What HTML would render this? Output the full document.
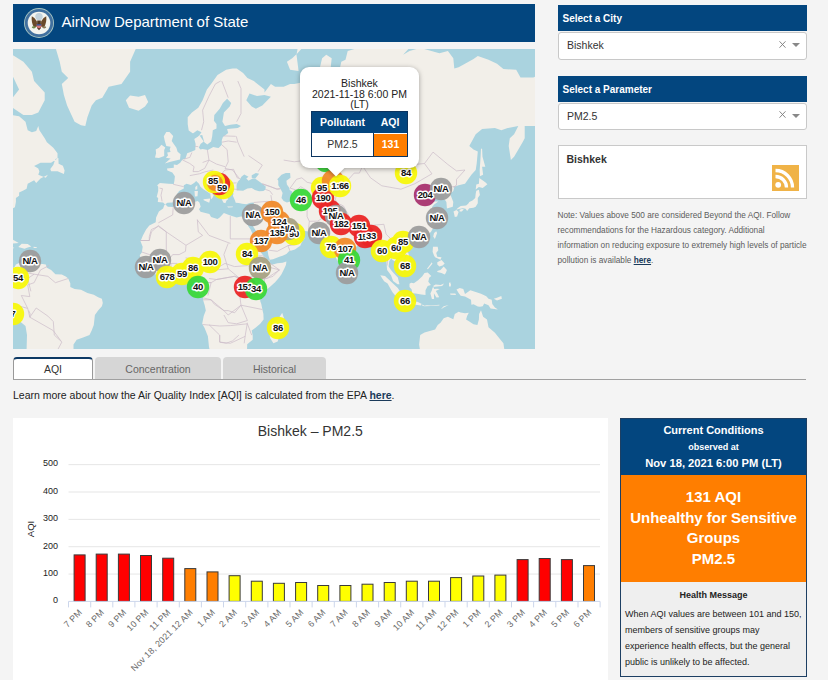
<!DOCTYPE html>
<html><head><meta charset="utf-8">
<style>
*{margin:0;padding:0;box-sizing:border-box}
html,body{width:828px;height:680px;overflow:hidden;background:#f4f4f4;font-family:"Liberation Sans",sans-serif;color:#333}
.a{position:absolute}
.hdr{left:13px;top:4px;width:522px;height:38px;background:#03467f}
.hdr .t{left:48.5px;top:9px;font-size:15px;color:#fff;line-height:18px;white-space:nowrap}
.map{left:13px;top:49px;width:522px;height:300px;background:#aad3df;overflow:hidden}
.sh{left:557.5px;width:249px;height:26px;background:#03467f;color:#fff;font-weight:bold;font-size:10px;padding-left:5px;line-height:28px}
.sel{left:557.5px;width:249px;height:27.4px;background:#fff;border:1px solid #c8c8c8;border-radius:3px;font-size:10.5px;color:#333;padding-left:8.5px;line-height:24px}
.sel .x{left:220px;top:7.5px;width:7px;height:7px}
.sel .ar{left:233px;top:10px;width:0;height:0;border-left:4px solid transparent;border-right:4px solid transparent;border-top:4px solid #888}
.box{left:557.5px;top:145px;width:249px;height:54px;background:#fff;border:1px solid #c9c9c9}
.note{left:557.5px;top:208px;width:252px;font-size:8.25px;line-height:15px;color:#5c5c5c}
.tab{top:357px;height:22px;border-radius:4px 4px 0 0;font-size:10.5px;text-align:center;line-height:24px}
.learn{left:13px;top:388px;font-size:10.5px;color:#222;white-space:nowrap;line-height:14px}
.chart{left:13px;top:418px;width:595px;height:262px;background:#fff}
.cc{left:620px;top:418px;width:187px;height:259px;border:1px solid #1d3f63;background:#efefef}
</style></head><body>

<div class="a hdr">
  <svg class="a" style="left:10px;top:3px" width="32" height="32" viewBox="0 0 32 32">
    <circle cx="16" cy="16" r="15" fill="#a9c6c2"/>
    <circle cx="16" cy="16" r="14.1" fill="#41709f"/>
    <circle cx="16" cy="16" r="11.3" fill="#f4f4ef"/>
    <circle cx="16" cy="9.6" r="3.7" fill="#c3d2dc"/>
    <path d="M8.8 9.2 Q8 15.5 11 20.3 L14.2 19.6 L13.8 14.2 Q12.3 10.8 8.8 9.2Z" fill="#6b4a2a"/>
    <path d="M23.2 9.2 Q24 15.5 21 20.3 L17.8 19.6 L18.2 14.2 Q19.7 10.8 23.2 9.2Z" fill="#6b4a2a"/>
    <path d="M14.2 13.5 L17.8 13.5 L18 21 L16 23.2 L14 21Z" fill="#4e3620"/>
    <path d="M13.7 17 h4.6 v3 q-2.3 2.6 -4.6 0z" fill="#d7777a"/>
    <rect x="13.7" y="17" width="4.6" height="1.6" fill="#3f5390"/>
    <ellipse cx="10.8" cy="20.3" rx="2" ry="1.1" fill="#6f8c4c"/>
    <ellipse cx="21.2" cy="20.3" rx="2" ry="1.1" fill="#8a7a5a"/>
  </svg>
  <div class="a t">AirNow Department of State</div>
</div>

<div class="a map" id="map"><svg width="522" height="300" viewBox="0 0 522 300" style="position:absolute;left:0;top:0">
<rect width="522" height="300" fill="#aad3df"/>
<path d="M8.3 -37.4L23.2 -72.7L57.3 -95.1L100.0 -112.6L121.3 -87.2L138.4 -72.7L125.6 -27.5L123.5 -1.8L117.1 12.8L117.1 22.7L108.5 34.9L95.7 37.8L89.3 48.7L82.9 51.3L78.7 56.4L74.4 68.2L72.3 77.0L68.0 76.2L61.6 72.7L57.3 63.6L54.1 56.4L50.9 46.1L48.8 34.9L55.2 29.0L48.8 22.7L46.7 12.8L42.4 -1.8L31.7 -18.4L18.9 -22.8ZM112.8 51.3L117.1 46.6L125.6 47.7L132.0 46.1L135.2 52.9L132.0 57.4L125.6 61.7L119.2 59.8L116.0 58.8ZM-6.7 2.0L10.4 12.8L18.9 22.7L21.1 32.0L31.7 43.4L31.7 51.3L25.3 63.6L18.9 65.9L10.4 65.9L-0.3 58.8L-2.4 51.3L6.1 40.6L-2.4 22.7L-17.3 25.9L-28.0 16.2L-19.5 2.0ZM-49.3 77.0L-38.7 81.2L-33.3 89.3L-23.7 91.2L-12.0 96.9L-10.9 104.2L-5.6 109.4L-4.5 98.8L-0.3 93.2L-0.3 85.3L-2.4 74.9L-2.4 65.9L6.1 67.3L12.5 72.7L14.7 81.2L18.9 83.3L23.2 82.1L25.3 77.0L26.4 81.2L31.7 89.3L33.9 93.2L40.3 98.8L44.5 104.2L44.5 109.4L38.1 113.8L27.5 113.8L21.1 117.1L25.3 119.4L26.4 122.6L25.3 125.7L32.8 128.8L34.9 125.7L27.5 129.4L23.2 133.9L21.1 131.2L14.7 134.7L13.6 139.7L10.4 141.4L6.1 143.4L6.1 146.7L2.9 148.9L2.9 152.9L1.9 158.2L-0.3 159.5L-2.4 161.3L-6.7 164.6L-9.9 169.6L-7.7 178.1L-6.7 182.2L-8.8 182.4L-12.0 176.9L-14.1 171.4L-19.5 170.1L-49.3 173.3ZM38.1 122.2L44.5 122.2L50.9 125.1L51.6 121.6L49.9 116.8L45.6 114.8L45.4 109.1L42.4 110.1L40.3 116.1L37.3 120.0ZM-17.3 189.9L-8.8 187.1L-1.3 189.9L5.7 194.0L-1.3 194.7L-6.7 190.3L-17.3 190.3ZM5.3 198.1L8.7 194.7L14.7 195.1L18.3 197.6L14.7 198.5L11.5 199.8ZM-3.0 198.3L1.4 198.7L-0.3 199.6ZM20.6 197.8L24.1 198.3L23.4 199.0L20.6 199.0ZM-0.3 219.6L1.9 217.6L2.9 215.5L6.1 214.0L10.4 211.8L11.5 214.4L14.7 211.8L18.9 215.5L23.2 215.3L29.6 215.0L32.8 215.5L33.9 218.7L38.1 220.9L42.4 225.2L48.8 225.6L53.1 227.7L55.2 229.5L57.3 234.2L57.3 238.0L61.6 240.1L68.0 240.8L74.4 244.0L80.8 245.7L85.1 248.3L88.9 249.8L89.8 254.0L88.9 257.3L85.1 261.6L81.9 266.0L80.8 275.9L78.7 281.6L76.5 286.1L70.1 288.4L63.7 290.8L60.5 295.5L60.5 301.5L57.3 307.6L10.4 307.6L13.6 300.3L14.0 286.1L12.5 277.0L1.9 268.2L-0.3 263.8L-5.6 254.0L-8.8 248.7L-6.7 238.0L-4.1 234.8L-0.9 229.5L-1.3 223.0L-4.5 217.6L-8.8 218.7L-13.1 216.6L-28.0 207.8L-28.0 220.9ZM152.1 155.6L150.1 153.5L144.8 152.9L145.2 148.9L143.7 148.1L145.2 141.9L145.2 137.7L144.2 136.2L146.9 134.1L155.5 134.7L160.8 135.0L161.4 131.8L161.9 127.2L159.3 123.5L154.4 121.6L154.0 119.4L160.8 118.7L160.8 115.5L164.0 116.1L167.2 113.8L169.3 110.8L172.5 109.4L174.2 104.2L178.9 102.4L182.3 101.0L182.6 95.0L181.3 90.1L186.4 86.5L181.1 85.3L175.7 81.6L174.7 74.9L174.7 68.2L178.9 63.6L185.3 58.8L189.6 51.3L193.9 40.6L198.1 34.9L204.5 25.9L213.1 20.8L219.5 19.5L223.7 19.5L230.1 24.0L234.4 29.0L240.8 32.0L251.5 40.6L251.5 43.4L257.9 34.9L262.1 37.8L270.7 37.8L277.1 34.9L281.3 34.9L289.9 33.2L294.1 27.1L306.9 32.0L309.1 36.1L311.2 33.2L305.9 22.7L309.1 9.3L313.3 5.7L318.7 9.3L317.6 19.5L319.7 34.9L321.9 43.4L324.0 32.0L328.3 12.8L332.5 10.7L334.7 2.0L347.5 -1.8L349.6 -9.8L360.3 -18.4L377.3 -27.5L385.9 -34.3L394.4 -24.7L402.9 -16.6L400.8 -5.8L390.1 5.7L396.5 2.0L407.2 -1.1L415.7 1.2L426.4 4.2L434.9 2.0L440.3 9.3L441.3 19.5L445.6 18.2L452.0 14.8L460.5 10.0L464.8 7.1L475.5 10.7L484.0 14.8L490.4 20.1L503.2 20.8L507.5 28.4L520.3 28.4L526.7 25.9L548.0 32.0L569.3 48.7L569.3 77.0L526.7 77.0L511.7 77.0L511.7 89.3L509.6 93.2L501.1 107.7L497.9 111.1L495.7 96.9L496.8 89.3L501.1 85.3L505.3 77.0L494.7 79.1L488.3 81.2L481.9 79.1L469.1 80.0L462.7 85.3L456.3 96.9L460.5 100.6L464.8 102.4L463.7 114.5L462.7 121.0L458.4 125.7L452.0 134.7L445.6 136.2L441.3 137.7L440.3 141.9L437.1 144.7L440.3 152.9L439.8 157.7L433.9 159.5L433.4 152.9L430.7 148.9L430.7 144.7L424.3 143.4L422.1 147.5L424.3 142.5L417.9 147.0L415.1 147.5L415.7 151.6L418.5 152.4L425.3 152.4L421.1 155.6L418.9 158.2L421.7 164.6L424.3 168.9L424.3 172.1L420.0 179.3L417.9 182.9L412.5 187.6L406.1 189.4L399.7 192.2L398.0 190.8L394.4 191.0L391.2 194.4L390.1 197.8L395.5 204.5L397.2 212.2L394.4 214.8L390.1 218.7L388.0 219.6L387.8 215.5L383.7 213.3L379.5 211.1L378.4 208.9L376.3 212.2L375.6 217.6L378.0 220.9L380.1 223.5L384.8 228.4L386.5 235.2L384.6 235.2L380.1 232.0L378.0 226.2L374.1 220.9L373.7 216.6L372.6 203.4L371.4 201.2L366.7 203.9L365.2 202.3L365.6 196.7L360.9 192.2L359.8 188.7L357.1 189.9L353.9 190.6L349.6 191.0L348.5 194.4L344.3 196.7L339.6 201.2L335.3 204.5L335.1 209.4L334.2 214.4L332.5 215.9L329.3 220.9L327.2 218.9L325.5 213.7L323.6 210.2L321.9 205.6L319.7 200.1L319.3 195.6L319.3 192.2L318.7 190.3L314.4 192.6L311.2 189.2L314.0 188.0L310.1 186.4L307.6 184.1L306.1 181.9L300.5 182.2L295.4 182.4L288.8 181.5L286.2 181.0L284.5 178.1L280.3 179.1L273.9 176.2L270.7 170.9L267.5 170.9L266.4 172.6L268.5 176.9L271.1 180.5L272.4 181.7L273.2 180.3L273.9 184.1L279.2 184.8L282.4 181.7L284.1 180.1L284.5 184.1L289.2 186.2L291.6 188.9L288.8 193.3L287.3 196.7L284.7 198.5L282.0 200.5L276.0 202.3L273.4 205.0L269.6 206.7L266.4 207.8L260.0 210.2L256.8 210.7L256.2 213.3L258.9 215.7L264.3 214.2L269.6 213.7L273.4 212.6L273.0 215.7L271.7 218.7L268.5 225.2L266.2 228.4L262.1 233.3L256.8 238.0L252.7 241.6L249.3 244.4L247.6 248.0L247.2 251.9L248.3 255.1L249.3 260.1L250.4 264.9L250.6 270.4L247.2 274.8L242.5 278.8L238.7 281.6L239.7 286.4L239.7 290.8L234.2 295.2L234.0 301.5L232.3 303.9L228.0 315.2L200.3 317.8L196.0 297.9L194.9 287.3L191.7 279.3L189.2 274.8L190.7 267.1L192.8 261.6L191.7 256.2L190.0 250.8L190.2 248.7L184.9 243.3L183.2 239.1L184.3 235.9L184.9 230.5L182.6 228.4L176.8 228.8L173.6 224.5L168.3 224.5L164.0 226.2L159.7 227.7L155.5 226.9L148.0 228.6L143.7 226.2L139.5 223.0L136.3 220.2L135.2 217.2L132.0 214.4L128.4 211.3L127.9 208.9L126.7 206.3L128.8 203.4L129.7 197.8L128.8 195.6L127.5 192.2L129.9 186.4L133.1 180.5L136.3 176.5L142.7 173.3L143.1 168.4L145.9 162.6L150.1 159.5L151.4 156.1ZM151.8 114.5L157.6 112.8L167.0 110.4L167.6 105.2L164.6 102.8L163.4 98.8L160.6 94.7L158.7 92.0L160.2 86.9L156.5 82.9L153.3 82.9L150.8 87.3L151.8 92.0L153.3 96.9L157.6 97.7L156.7 100.6L157.6 103.1L154.2 103.5L155.0 106.6L152.9 108.7L157.6 109.4ZM151.2 107.0L151.2 101.0L152.3 98.4L148.4 95.8L145.9 98.8L142.7 100.6L143.1 104.2L142.0 108.4L145.9 109.1ZM273.9 12.8L277.1 20.8L285.6 22.1L283.5 5.7L285.6 -5.8L292.0 -18.4L304.8 -27.5L309.1 -22.8L298.4 -9.8L289.9 -1.8L284.5 4.2L279.2 9.3ZM334.2 224.1L335.7 225.4L338.5 223.0L337.2 219.2L334.7 217.0L334.2 220.9ZM420.2 187.6L421.9 189.9L424.1 184.1L423.2 182.2L421.1 184.1ZM395.7 196.3L399.7 194.2L400.8 195.3L398.7 198.3L395.9 197.8ZM443.3 160.8L445.6 160.0L449.9 159.2L452.6 159.8L454.1 162.1L456.3 159.2L460.5 158.7L462.7 157.7L464.8 154.3L464.8 148.9L466.9 146.1L465.9 140.8L463.3 141.7L462.7 144.7L462.2 148.9L459.5 151.6L456.3 152.9L455.2 154.8L453.1 156.6L447.7 156.9L444.5 159.2ZM440.5 162.6L443.5 161.0L445.6 163.1L444.1 167.6L441.8 167.9L440.9 164.1ZM446.5 162.6L448.8 162.6L450.9 160.3L448.8 160.0L446.7 160.8ZM462.7 140.5L465.9 137.9L469.7 139.1L474.4 135.3L472.3 133.3L466.3 129.1L465.9 134.7L463.3 135.6ZM466.9 127.2L470.1 125.7L469.1 117.7L472.3 117.7L469.5 107.7L469.1 99.9L468.0 99.5L467.4 111.1L466.7 121.0ZM420.0 197.8L424.7 197.8L425.3 201.2L423.2 203.9L424.3 207.8L428.5 208.3L427.5 210.7L422.1 208.3L421.1 206.7L419.6 202.7ZM424.3 222.0L427.5 220.9L430.7 217.6L433.9 220.9L432.8 224.1L431.7 225.6L428.5 224.1L424.3 223.0ZM424.3 213.3L428.5 211.1L431.7 214.4L429.6 216.6L426.4 217.6L424.3 215.5ZM414.0 219.8L418.9 213.3L419.4 214.8L414.9 220.2ZM396.5 234.8L398.2 233.7L400.8 234.2L405.1 231.2L409.3 227.3L411.5 224.1L414.7 223.5L418.3 226.9L416.2 228.8L415.3 232.7L417.9 235.9L414.7 236.9L412.5 241.2L412.5 246.1L408.3 245.5L402.5 244.4L399.1 244.2L398.7 240.6L396.5 238.0ZM367.3 226.2L372.0 226.9L378.4 233.1L384.8 239.1L386.9 242.3L390.1 244.8L389.7 250.4L386.9 250.4L382.2 246.5L379.5 243.3L376.5 238.0L374.6 234.4L371.1 232.2L368.8 228.8ZM388.4 252.5L390.1 250.6L395.0 251.5L399.7 252.5L404.4 252.8L408.5 254.7L408.1 256.6L400.8 255.6L394.4 254.7L389.1 253.0ZM409.3 255.6L411.5 256.8L413.6 256.2L417.9 256.4L426.4 255.8L426.4 256.6L417.9 257.1L411.5 257.3L409.3 256.8ZM428.5 259.4L430.7 257.3L435.6 256.0L430.7 258.4L428.5 259.9ZM417.4 244.4L418.9 250.0L421.1 250.0L420.9 244.2L423.4 248.5L426.2 248.3L424.3 244.4L422.8 242.1L426.8 240.1L424.1 239.7L421.1 239.9L420.4 236.7L422.6 235.4L427.5 236.1L431.1 234.6L429.2 237.1L421.7 237.8L419.6 238.4L418.9 241.2ZM436.0 234.2L437.1 233.1L438.1 235.9L437.1 238.0L436.0 236.9ZM437.1 244.4L442.4 244.4L443.0 246.1L437.5 245.7ZM443.5 240.6L446.7 238.9L450.3 240.1L452.0 245.0L457.3 241.2L462.7 243.1L468.0 244.8L473.3 247.2L475.5 249.8L478.7 250.8L479.3 255.1L481.9 258.4L485.1 260.5L477.6 259.4L475.5 256.2L471.2 254.5L469.7 257.3L466.9 257.7L464.8 257.5L460.5 255.3L458.4 255.8L458.0 250.8L452.0 247.6L447.7 246.8L445.6 244.0ZM480.8 249.8L484.0 248.7L488.3 247.0L488.9 249.8L484.0 251.5ZM406.1 295.5L407.2 286.1L411.5 283.4L422.1 280.4L424.7 275.9L427.5 273.7L430.7 269.3L434.9 267.7L440.3 270.2L441.8 264.9L445.6 262.7L447.7 263.4L452.0 264.2L455.8 263.8L454.1 267.1L453.1 270.4L456.3 272.6L460.5 275.3L464.4 275.9L465.9 270.4L466.1 264.9L468.0 261.2L470.1 267.7L474.0 270.4L475.5 278.2L481.9 283.8L485.7 288.4L490.4 294.3L491.5 301.5L490.4 310.1L409.3 315.2ZM269.2 263.8L271.7 271.5L270.2 274.8L267.5 282.7L264.7 292.6L260.4 294.3L257.4 289.6L256.4 285.0L258.5 279.3L257.9 274.8L262.1 272.1L266.4 268.2Z" fill="#f2efe9"/>
<path d="M152.3 155.3L154.4 153.7L159.7 153.5L162.9 150.2L164.4 148.1L163.4 146.1L166.1 141.9L170.8 139.4L170.8 136.2L173.6 134.7L177.9 135.9L181.1 133.9L183.2 132.1L186.0 134.7L187.5 137.7L190.7 140.5L193.9 142.5L197.3 144.7L198.1 150.2L199.4 148.9L200.7 146.4L199.2 144.7L203.5 144.2L200.3 141.9L198.1 139.4L193.9 137.1L190.2 131.8L190.7 128.8L193.4 128.4L196.0 131.8L200.3 135.6L205.2 139.7L205.4 143.6L207.1 146.1L208.8 150.2L210.3 153.5L212.4 154.3L213.5 151.6L215.2 150.2L213.1 146.1L212.4 143.4L215.2 142.8L219.5 142.5L220.5 144.7L219.9 146.7L222.0 151.6L222.7 153.7L225.9 154.0L229.1 154.8L233.3 155.3L237.6 153.7L240.8 153.5L240.8 156.9L239.3 163.4L237.6 167.1L233.3 168.1L228.0 167.6L223.7 168.4L217.3 166.4L210.9 163.9L206.7 168.4L204.5 170.1L198.1 167.9L196.4 165.1L187.5 162.8L186.0 160.3L187.7 157.7L186.4 153.5L184.7 152.1L181.1 152.9L174.7 153.5L170.4 153.5L164.0 156.1L159.7 157.9L154.8 157.7L152.7 155.8ZM223.7 141.4L225.9 141.4L230.1 141.7L234.4 139.4L238.7 139.1L241.9 141.1L246.1 142.2L250.4 141.9L252.5 140.5L252.7 137.4L249.3 134.7L245.5 132.1L242.3 129.7L239.7 129.4L235.5 131.8L233.3 129.4L235.5 127.8L231.2 125.4L228.4 127.8L227.1 130.3L225.0 132.4L223.7 135.3L223.5 137.7ZM238.7 128.8L242.3 129.4L246.1 124.8L242.9 124.1L238.7 126.3ZM264.3 130.3L268.5 125.7L272.8 124.1L277.1 124.1L277.5 128.8L273.4 131.8L273.9 135.6L276.4 139.1L276.6 141.1L279.2 142.5L278.8 146.1L279.0 152.1L273.9 153.5L270.7 151.9L268.5 148.9L269.6 143.9L267.5 139.7L265.3 136.2L265.3 131.8ZM233.3 170.9L233.5 173.3L235.5 177.4L237.6 180.5L239.7 185.2L242.9 191.0L243.6 196.7L246.1 199.0L248.3 203.9L250.4 206.7L254.2 210.7L256.4 211.8L256.8 210.7L255.3 206.1L254.7 202.3L252.5 197.8L249.3 193.8L247.2 190.3L246.1 185.2L243.4 182.4L240.8 178.6L238.7 175.3L238.5 172.1L237.0 176.2L235.5 174.5ZM182.1 88.9L186.6 86.1L188.5 83.3L184.3 81.2L178.9 85.3ZM186.6 86.5L189.2 86.1L191.3 93.2L194.3 95.4L198.1 92.4L199.2 87.3L199.8 81.2L203.5 79.6L203.5 74.9L200.9 71.8L201.3 65.9L206.7 59.8L209.9 53.9L214.1 49.8L218.2 53.9L216.7 57.4L210.9 63.6L209.4 72.7L212.0 77.0L217.3 75.7L223.7 74.9L228.0 77.0L224.8 79.1L214.1 80.0L215.2 84.1L209.9 88.1L208.8 91.2L208.8 95.8L205.6 99.1L203.7 98.8L200.3 98.0L194.9 101.0L189.6 99.9L187.5 100.6L185.8 98.8L187.5 95.0L190.7 92.4ZM236.5 44.5L244.0 47.1L251.5 46.1L257.9 47.7L249.3 56.4L242.9 59.8L238.7 57.4L233.3 51.3ZM231.6 240.1L236.1 237.4L237.0 240.1L234.4 243.3L231.8 242.3Z" fill="#aad3df"/>
<path d="M190.5 150.2L197.3 149.4L196.2 153.7L190.7 151.3ZM181.9 147.5L184.5 147.2L184.9 141.9L181.5 141.9ZM182.3 140.8L184.3 140.2L184.3 136.2L182.3 137.9ZM214.1 157.4L220.1 157.4L219.5 158.2L215.2 158.5ZM232.9 159.0L237.8 156.6L235.5 157.4L232.9 157.9Z" fill="#f2efe9"/>
<path d="M270.7 111.1L281.3 112.8L294.1 111.1L295.2 100.6L311.2 96.9L319.7 100.6L326.1 99.9L332.5 111.1L341.1 111.1L349.6 117.1M349.6 117.1L356.0 112.5L373.1 107.7L381.6 109.4L394.4 116.1L411.5 114.5L420.0 103.1L434.9 115.5L443.5 121.9L452.0 121.0L443.5 130.3L443.5 136.2L440.3 138.2M349.6 117.1L357.5 128.8L368.8 136.8L388.0 140.2L401.9 134.7L418.9 124.8L411.5 114.5M277.1 139.1L283.5 130.3L288.8 128.8L294.1 133.3L300.5 134.7L304.8 137.7L311.2 141.4L315.5 137.7L321.9 135.6L334.7 137.7L335.7 130.3L341.1 124.1L346.4 124.1L349.6 117.1M321.9 152.9L330.4 156.9L334.7 164.6L336.8 169.6L351.7 176.0L360.3 176.2L370.9 175.3L373.1 185.2L379.5 191.5L385.9 188.0L394.4 190.8M294.1 154.3L294.1 167.6L296.3 172.3L295.4 182.4M313.3 186.4L315.5 184.1L313.3 175.7L321.9 164.6L321.9 152.9M321.9 152.9L315.5 159.5L312.3 167.1L304.8 172.1L296.3 172.3M257.9 146.1L258.9 152.4L261.1 158.2L263.2 164.6L266.4 170.9M240.8 153.5L253.6 152.4L258.9 152.4M247.2 165.9L257.9 173.3L266.4 173.3M255.7 201.2L264.3 202.3L274.9 196.7L281.3 194.4L284.5 188.7M217.3 167.1L217.3 189.9L242.9 189.9M184.3 170.9L196.0 186.4L217.3 194.4M145.4 176.5L153.3 182.9L173.0 196.3L189.6 186.4M127.7 191.5L136.3 191.5L138.4 182.9L145.4 176.5M215.2 219.8L210.9 205.6L215.2 194.4M172.5 208.9L183.2 210.0L196.0 210.0L193.9 218.7L198.1 221.3L215.2 219.8L228.0 230.5L238.7 227.3L253.6 229.5L266.4 220.9L255.7 213.3M183.2 233.7L188.5 232.7L198.1 233.7L203.5 230.5L221.6 227.3L228.0 230.5M189.6 248.7L198.1 250.8L210.9 261.6L215.2 266.0L228.0 256.2L249.3 260.5M228.0 240.1L236.5 240.1L242.9 245.5L251.5 241.2M189.6 275.5L206.7 277.0L217.3 276.6L234.4 274.8L238.7 286.1M196.0 275.7L206.7 286.1L206.7 293.1L217.3 294.3L232.3 287.3M160.2 135.3L170.8 137.7M169.3 110.8L176.8 114.5L181.1 117.7L180.0 122.6L185.3 122.6L191.7 119.4L196.0 111.1L194.3 100.6M214.1 100.6L215.2 112.8L212.0 119.4L219.5 121.0L225.9 128.8M249.3 116.1L245.1 122.6M235.5 106.6L249.3 116.1M231.2 107.7L224.8 93.2L223.3 87.3M223.7 72.7L228.0 64.5L228.0 39.5L224.8 32.0M188.5 81.2L190.7 72.7L189.6 61.2L196.0 47.1L202.4 34.9L207.7 32.0M215.2 48.7L208.8 32.0M249.3 134.7L257.9 137.7L264.3 140.5L267.5 139.7M225.9 140.5L219.5 140.0L212.0 141.4L207.7 139.1M17.9 242.3L14.7 229.5L21.1 225.2L34.9 227.3L42.4 233.7L55.2 229.5M8.3 246.5L14.7 259.4L16.8 268.2L40.3 281.6L48.8 293.1L42.4 305.1M21.1 225.2L10.4 223.0L10.4 213.3M184.3 170.4L185.3 182.9L189.6 186.4M127.7 191.5L136.3 191.5L136.3 187.6L138.4 180.5L145.4 177.4L153.3 182.9L153.3 202.3L139.5 204.5L138.0 206.1L128.8 203.0M173.0 196.3L172.5 202.3L166.1 205.6L159.7 205.6L152.3 215.5M171.7 212.9L183.2 210.0L192.8 208.5L194.9 210.0M193.9 210.0L197.1 217.6L204.5 218.7L212.0 214.4M196.0 229.5L203.5 230.5L221.6 227.3L230.1 230.1M212.0 214.4L221.6 217.6L234.4 216.6L237.6 217.6M237.6 217.6L241.9 207.4L249.3 206.7L254.7 211.1M238.7 227.3L248.3 230.5L253.6 229.5L260.0 227.3L266.4 220.9L257.9 218.7L255.7 214.4M251.5 241.4L251.5 229.5M236.5 240.1L244.0 245.5L247.8 248.0M190.0 250.8L198.1 250.8L201.3 255.1L210.9 261.6L215.2 261.6L221.6 263.8L228.0 256.2L226.9 247.6L226.9 240.1L228.0 235.9L230.1 232.7M210.9 266.0L215.2 273.7L223.7 274.8L234.4 271.5L228.0 256.2M234.4 273.7L232.3 286.1L231.2 294.3M206.7 286.1L206.7 293.1L213.1 294.3L219.5 291.9L225.9 286.1M184.9 233.3L188.1 233.3L198.1 233.7L194.9 246.5M157.6 227.3L158.0 214.4L164.0 214.4L166.6 225.0M169.8 224.3L171.7 212.9M182.1 228.4L187.5 223.0L191.7 215.5L194.9 210.0M160.2 158.2L159.7 165.9L145.4 173.8M139.5 223.0L146.9 219.8L146.9 215.5L140.5 211.1L134.8 211.1L128.4 211.3M146.9 215.5L153.3 215.5L158.0 214.4M148.0 228.6L146.9 219.8M374.1 216.6L375.2 203.4L372.0 195.6L377.3 193.3M381.6 188.7L388.0 196.7L393.3 205.6L390.1 213.3M383.7 213.3L388.0 206.7L382.7 207.8M378.4 194.0L381.6 199.4L389.1 204.5M149.1 152.4L148.0 146.1L149.5 139.7L146.5 139.1M182.1 97.3L185.3 97.7M171.0 110.1L176.8 108.4L178.9 103.5M176.8 126.6L186.4 124.8L191.7 122.9L200.3 121.0M189.6 113.5L196.0 111.1L203.5 115.1L212.0 117.7M198.1 125.7L206.7 127.2L212.0 121.0M212.0 121.0L220.5 120.3L224.2 128.8L227.4 129.7M207.7 127.2L212.0 132.4L217.3 134.1L223.7 133.9M192.8 128.8L198.1 125.7L204.5 127.8L207.7 139.1L205.2 139.7M208.8 141.1L220.1 140.0M208.8 93.2L215.2 92.0L223.7 93.2M208.8 95.8L214.1 100.6M210.5 86.9L222.7 87.3M252.5 140.5L256.8 141.9L259.6 145.6M249.3 135.0L263.2 139.7L267.5 139.7M277.1 139.1L283.5 141.1L287.7 137.7L294.1 141.4L295.2 146.1L300.5 150.2L305.9 152.1M279.0 152.1L285.6 150.2L294.1 154.3M315.5 137.7L313.3 141.9L319.7 143.4L324.0 143.1L334.7 137.7M305.9 152.1L315.5 153.5L323.6 152.1M335.1 137.7L324.0 143.1L321.9 152.9M429.2 144.7L439.2 137.7L442.8 137.7M352.8 189.9L353.9 180.5L360.3 182.9L361.3 192.2M334.7 173.8L351.7 179.3M238.7 172.1L242.9 167.1L247.2 165.9M240.8 163.4L246.8 162.3L251.5 159.5L253.6 152.4M273.9 184.5L281.8 188.3L283.5 195.6L274.9 196.7M274.9 196.7L277.1 202.1M237.0 167.6L238.5 172.1M36.0 216.6L27.5 220.9L21.1 233.7L14.7 235.9L16.8 247.6L8.3 246.5M14.7 259.4L7.2 257.3M15.7 261.6L17.2 264.9L16.8 268.2L23.2 259.0L34.9 267.1L40.3 272.6L41.3 286.1L47.7 291.9" fill="none" stroke="#cbbcc8" stroke-width="0.7"/>
<circle cx="171" cy="154" r="11.2" fill="#9d9d9d" fill-opacity="0.95"/><circle cx="17" cy="212" r="11.2" fill="#9d9d9d" fill-opacity="0.95"/><circle cx="5" cy="229" r="11.2" fill="#f7f70c" fill-opacity="0.95"/><circle cx="0" cy="265" r="11.2" fill="#f7f70c" fill-opacity="0.95"/><circle cx="133" cy="218" r="11.2" fill="#9d9d9d" fill-opacity="0.95"/><circle cx="147" cy="211" r="11.2" fill="#9d9d9d" fill-opacity="0.95"/><circle cx="154" cy="228" r="11.2" fill="#f7f70c" fill-opacity="0.95"/><circle cx="169" cy="225" r="11.2" fill="#f7f70c" fill-opacity="0.95"/><circle cx="180" cy="219" r="11.2" fill="#f7f70c" fill-opacity="0.95"/><circle cx="197" cy="213" r="11.2" fill="#f7f70c" fill-opacity="0.95"/><circle cx="185" cy="238" r="11.2" fill="#3ad83a" fill-opacity="0.95"/><circle cx="210" cy="139" r="11.2" fill="#f7f70c" fill-opacity="0.95"/><circle cx="206" cy="135" r="11.2" fill="#ea2626" fill-opacity="0.95"/><circle cx="201" cy="133" r="11.2" fill="#f7f70c" fill-opacity="0.95"/><circle cx="202" cy="134" r="8" fill="#f08a2a" fill-opacity="0.95"/><circle cx="240" cy="166" r="11.2" fill="#9d9d9d" fill-opacity="0.95"/><circle cx="259" cy="163" r="11.2" fill="#f08a2a" fill-opacity="0.95"/><circle cx="266" cy="173" r="11.2" fill="#f08a2a" fill-opacity="0.95"/><circle cx="281" cy="185" r="11.2" fill="#f7f70c" fill-opacity="0.95"/><circle cx="275" cy="180" r="11.2" fill="#a8a184" fill-opacity="0.95"/><circle cx="264" cy="184" r="11.2" fill="#f08a2a" fill-opacity="0.95"/><circle cx="248" cy="192" r="11.2" fill="#f08a2a" fill-opacity="0.95"/><circle cx="234" cy="205" r="11.2" fill="#f7f70c" fill-opacity="0.95"/><circle cx="247" cy="219" r="11.2" fill="#a8a184" fill-opacity="0.95"/><circle cx="232" cy="238" r="11.2" fill="#ea2626" fill-opacity="0.95"/><circle cx="243" cy="240" r="11.2" fill="#3ad83a" fill-opacity="0.95"/><circle cx="265" cy="279" r="11.2" fill="#f7f70c" fill-opacity="0.95"/><circle cx="313" cy="112" r="11.2" fill="#3ad83a" fill-opacity="0.95"/><circle cx="288" cy="151" r="11.2" fill="#3ad83a" fill-opacity="0.95"/><circle cx="309" cy="139" r="11.2" fill="#f7f70c" fill-opacity="0.95"/><circle cx="310" cy="149" r="11.2" fill="#ea2626" fill-opacity="0.95"/><circle cx="320" cy="132" r="11.2" fill="#f08a2a" fill-opacity="0.95"/><circle cx="327" cy="137" r="11.2" fill="#f7f70c" fill-opacity="0.95"/><circle cx="393" cy="124" r="11.2" fill="#f7f70c" fill-opacity="0.95"/><circle cx="412" cy="146" r="11.2" fill="#a8336f" fill-opacity="0.95"/><circle cx="428" cy="140" r="11.2" fill="#9d9d9d" fill-opacity="0.95"/><circle cx="424" cy="169" r="11.2" fill="#9d9d9d" fill-opacity="0.95"/><circle cx="317" cy="162" r="11.2" fill="#ea2626" fill-opacity="0.95"/><circle cx="323" cy="167" r="11.2" fill="#9d9d9d" fill-opacity="0.95"/><circle cx="328" cy="175" r="11.2" fill="#ea2626" fill-opacity="0.95"/><circle cx="346" cy="177" r="11.2" fill="#ea2626" fill-opacity="0.95"/><circle cx="352" cy="188" r="11.2" fill="#ea2626" fill-opacity="0.95"/><circle cx="358" cy="187" r="11.2" fill="#ea2626" fill-opacity="0.95"/><circle cx="306" cy="184" r="11.2" fill="#9d9d9d" fill-opacity="0.95"/><circle cx="318" cy="198" r="11.2" fill="#f7f70c" fill-opacity="0.95"/><circle cx="332" cy="200" r="11.2" fill="#f08a2a" fill-opacity="0.95"/><circle cx="336" cy="211" r="11.2" fill="#3ad83a" fill-opacity="0.95"/><circle cx="334" cy="224" r="11.2" fill="#9d9d9d" fill-opacity="0.95"/><circle cx="369" cy="202" r="11.2" fill="#f7f70c" fill-opacity="0.95"/><circle cx="383" cy="199" r="11.2" fill="#f7f70c" fill-opacity="0.95"/><circle cx="390" cy="193" r="11.2" fill="#f7f70c" fill-opacity="0.95"/><circle cx="406" cy="188" r="11.2" fill="#9d9d9d" fill-opacity="0.95"/><circle cx="392" cy="217" r="11.2" fill="#f7f70c" fill-opacity="0.95"/><circle cx="392" cy="252" r="11.2" fill="#f7f70c" fill-opacity="0.95"/><g font-family="Liberation Sans" font-size="9.5" letter-spacing="-0.4" font-weight="bold" text-anchor="middle" fill="#111" stroke="#fff" stroke-width="2.9" paint-order="stroke" stroke-linejoin="round"><text x="171" y="157">N/A</text><text x="17" y="215">N/A</text><text x="5" y="232">54</text><text x="0" y="268">7</text><text x="133" y="221">N/A</text><text x="147" y="214">N/A</text><text x="154" y="231">678</text><text x="169" y="228">59</text><text x="180" y="222">86</text><text x="197" y="216">100</text><text x="185" y="241">40</text><text x="209" y="142">59</text><text x="200" y="135">85</text><text x="240" y="169">N/A</text><text x="259" y="166">150</text><text x="266" y="176">124</text><text x="281" y="188">90</text><text x="275" y="183">N/A</text><text x="264" y="187">135</text><text x="248" y="195">137</text><text x="234" y="208">84</text><text x="247" y="222">N/A</text><text x="232" y="241">151</text><text x="243" y="243">34</text><text x="265" y="282">86</text><text x="288" y="154">46</text><text x="309" y="142">95</text><text x="310" y="152">190</text><text x="327" y="140">1:66</text><text x="393" y="127">84</text><text x="412" y="149">204</text><text x="428" y="143">N/A</text><text x="424" y="172">N/A</text><text x="317" y="165">195</text><text x="323" y="170">N/A</text><text x="328" y="178">182</text><text x="346" y="180">151</text><text x="352" y="191">153</text><text x="358" y="190">33</text><text x="306" y="187">N/A</text><text x="318" y="201">76</text><text x="332" y="203">107</text><text x="336" y="214">41</text><text x="334" y="227">N/A</text><text x="369" y="205">60</text><text x="383" y="202">60</text><text x="390" y="196">85</text><text x="406" y="191">N/A</text><text x="392" y="220">68</text><text x="392" y="255">66</text></g>
<g font-family="Liberation Sans" font-size="9.5" letter-spacing="-0.4" font-weight="bold" text-anchor="middle" fill="#111" stroke="#fff" stroke-width="2.9" paint-order="stroke" stroke-linejoin="round"></g>
</svg></div><!--endmap--><!--popup-->
<div class="a" style="left:300px;top:67px;width:119px;height:101px;background:#fff;border-radius:9px;box-shadow:0 1px 5px rgba(0,0,0,.35)"></div>
<div class="a" style="left:323px;top:168px;width:26px;height:10px;overflow:hidden"><div style="position:absolute;left:7px;top:-6px;width:12px;height:12px;background:#fff;transform:rotate(45deg);box-shadow:0 1px 4px rgba(0,0,0,.3)"></div></div>
<div class="a" style="left:300px;top:78px;width:119px;text-align:center;font-size:10.5px;line-height:10.7px;color:#222">Bishkek<br>2021-11-18 6:00 PM<br>(LT)</div>
<div class="a" style="left:311px;top:111px;width:97px;height:46px;border:1px solid #0b3460;background:#fff">
 <div class="a" style="left:0;top:0;width:95px;height:21px;background:#03467f"></div>
 <div class="a" style="left:0;top:4px;width:61px;text-align:center;color:#fff;font-weight:bold;font-size:10.5px;line-height:12px">Pollutant</div>
 <div class="a" style="left:61px;top:4px;width:34px;text-align:center;color:#fff;font-weight:bold;font-size:10.5px;line-height:12px">AQI</div>
 <div class="a" style="left:61px;top:21px;width:1px;height:23px;background:#0b3460"></div>
 <div class="a" style="left:62px;top:22px;width:33px;height:22px;background:#ff7e00"></div>
 <div class="a" style="left:0;top:26px;width:61px;text-align:center;color:#333;font-size:10.5px;line-height:12px">PM2.5</div>
 <div class="a" style="left:62px;top:26px;width:33px;text-align:center;color:#fff;font-weight:bold;font-size:10.5px;line-height:12px">131</div>
</div>
<!--endpopup-->

<div class="a sh" style="top:5px">Select a City</div>
<div class="a sel" style="top:32.2px">Bishkek<svg class="a x" viewBox="0 0 7 7"><path d="M0.5 0.3L6.5 6.7M6.5 0.3L0.5 6.7" stroke="#7a7a7a" stroke-width="0.9"/></svg><span class="a ar"></span></div>
<div class="a sh" style="top:76px">Select a Parameter</div>
<div class="a sel" style="top:102.8px">PM2.5<svg class="a x" viewBox="0 0 7 7"><path d="M0.5 0.3L6.5 6.7M6.5 0.3L0.5 6.7" stroke="#7a7a7a" stroke-width="0.9"/></svg><span class="a ar"></span></div>
<div class="a box"><div class="a" style="left:8px;top:7px;font-size:10.5px;font-weight:bold;color:#333">Bishkek</div>
  <svg class="a" style="left:213.5px;top:19px" width="27" height="26" viewBox="0 0 27 26">
    <rect width="27" height="26" fill="#f0b347"/>
    <circle cx="6.2" cy="19.8" r="2.9" fill="#fff"/>
    <path d="M3.5 11.5 A11 11 0 0 1 14.5 22.5" stroke="#fff" stroke-width="3.3" fill="none"/>
    <path d="M3.5 5.5 A17 17 0 0 1 20.5 22.5" stroke="#fff" stroke-width="3.3" fill="none"/>
  </svg>
</div>
<div class="a note">Note: Values above 500 are considered Beyond the AQI. Follow<br>recommendations for the Hazardous category. Additional<br>information on reducing exposure to extremely high levels of particle<br>pollution is available <b style="color:#1a3a5a;text-decoration:underline">here</b>.</div>

<div class="a tab" style="left:13px;width:80px;background:#fff;border:1px solid #999;border-top:2.5px solid #0d3a66;border-bottom:none;color:#333;line-height:21.5px">AQI</div>
<div class="a tab" style="left:95px;width:126px;background:#d6d6d6;color:#666">Concentration</div>
<div class="a tab" style="left:223px;width:103px;background:#d6d6d6;color:#666">Historical</div>
<div class="a" style="left:13px;top:378.5px;width:793px;height:1px;background:#a0a0a0"></div>
<div class="a learn">Learn more about how the Air Quality Index [AQI] is calculated from the EPA <b style="font-weight:bold;color:#1a3a5a;text-decoration:underline">here</b>.</div>

<div class="a chart" id="chart"><svg width="595" height="262" style="position:absolute;left:0;top:0" font-family="Liberation Sans"><rect x="55.5" y="155.55" width="531.5" height="1" fill="#e6e6e6"/><rect x="55.5" y="128.20" width="531.5" height="1" fill="#e6e6e6"/><rect x="55.5" y="100.85" width="531.5" height="1" fill="#e6e6e6"/><rect x="55.5" y="73.50" width="531.5" height="1" fill="#e6e6e6"/><rect x="55.5" y="46.15" width="531.5" height="1" fill="#e6e6e6"/><text x="45" y="185.2" text-anchor="end" font-size="9" fill="#222">0</text><text x="45" y="157.8" text-anchor="end" font-size="9" fill="#222">100</text><text x="45" y="130.5" text-anchor="end" font-size="9" fill="#222">200</text><text x="45" y="103.1" text-anchor="end" font-size="9" fill="#222">300</text><text x="45" y="75.8" text-anchor="end" font-size="9" fill="#222">400</text><text x="45" y="48.4" text-anchor="end" font-size="9" fill="#222">500</text><rect x="61.1" y="136.9" width="11" height="46.5" fill="#ff0000" stroke="#3a3a3a" stroke-width="1"/><rect x="83.2" y="136.1" width="11" height="47.3" fill="#ff0000" stroke="#3a3a3a" stroke-width="1"/><rect x="105.4" y="136.1" width="11" height="47.3" fill="#ff0000" stroke="#3a3a3a" stroke-width="1"/><rect x="127.5" y="137.5" width="11" height="45.9" fill="#ff0000" stroke="#3a3a3a" stroke-width="1"/><rect x="149.7" y="140.2" width="11" height="43.2" fill="#ff0000" stroke="#3a3a3a" stroke-width="1"/><rect x="171.8" y="150.6" width="11" height="32.8" fill="#ff7e00" stroke="#3a3a3a" stroke-width="1"/><rect x="194.0" y="153.9" width="11" height="29.5" fill="#ff7e00" stroke="#3a3a3a" stroke-width="1"/><rect x="216.1" y="157.7" width="11" height="25.7" fill="#ffff00" stroke="#3a3a3a" stroke-width="1"/><rect x="238.3" y="163.2" width="11" height="20.2" fill="#ffff00" stroke="#3a3a3a" stroke-width="1"/><rect x="260.4" y="165.3" width="11" height="18.1" fill="#ffff00" stroke="#3a3a3a" stroke-width="1"/><rect x="282.6" y="164.5" width="11" height="18.9" fill="#ffff00" stroke="#3a3a3a" stroke-width="1"/><rect x="304.7" y="167.5" width="11" height="15.9" fill="#ffff00" stroke="#3a3a3a" stroke-width="1"/><rect x="326.9" y="167.5" width="11" height="15.9" fill="#ffff00" stroke="#3a3a3a" stroke-width="1"/><rect x="349.0" y="166.2" width="11" height="17.2" fill="#ffff00" stroke="#3a3a3a" stroke-width="1"/><rect x="371.2" y="164.5" width="11" height="18.9" fill="#ffff00" stroke="#3a3a3a" stroke-width="1"/><rect x="393.3" y="163.2" width="11" height="20.2" fill="#ffff00" stroke="#3a3a3a" stroke-width="1"/><rect x="415.5" y="163.2" width="11" height="20.2" fill="#ffff00" stroke="#3a3a3a" stroke-width="1"/><rect x="437.6" y="159.6" width="11" height="23.8" fill="#ffff00" stroke="#3a3a3a" stroke-width="1"/><rect x="459.8" y="158.0" width="11" height="25.4" fill="#ffff00" stroke="#3a3a3a" stroke-width="1"/><rect x="481.9" y="157.1" width="11" height="26.3" fill="#ffff00" stroke="#3a3a3a" stroke-width="1"/><rect x="504.1" y="141.6" width="11" height="41.8" fill="#ff0000" stroke="#3a3a3a" stroke-width="1"/><rect x="526.2" y="140.5" width="11" height="42.9" fill="#ff0000" stroke="#3a3a3a" stroke-width="1"/><rect x="548.4" y="141.6" width="11" height="41.8" fill="#ff0000" stroke="#3a3a3a" stroke-width="1"/><rect x="570.5" y="147.6" width="11" height="35.8" fill="#ff7e00" stroke="#3a3a3a" stroke-width="1"/><rect x="55.5" y="182.9" width="531.5" height="1" fill="#ccd6eb"/><rect x="55.0" y="183.4" width="1" height="6" fill="#ccd6eb"/><rect x="77.2" y="183.4" width="1" height="6" fill="#ccd6eb"/><rect x="99.3" y="183.4" width="1" height="6" fill="#ccd6eb"/><rect x="121.4" y="183.4" width="1" height="6" fill="#ccd6eb"/><rect x="143.6" y="183.4" width="1" height="6" fill="#ccd6eb"/><rect x="165.8" y="183.4" width="1" height="6" fill="#ccd6eb"/><rect x="187.9" y="183.4" width="1" height="6" fill="#ccd6eb"/><rect x="210.0" y="183.4" width="1" height="6" fill="#ccd6eb"/><rect x="232.2" y="183.4" width="1" height="6" fill="#ccd6eb"/><rect x="254.4" y="183.4" width="1" height="6" fill="#ccd6eb"/><rect x="276.5" y="183.4" width="1" height="6" fill="#ccd6eb"/><rect x="298.6" y="183.4" width="1" height="6" fill="#ccd6eb"/><rect x="320.8" y="183.4" width="1" height="6" fill="#ccd6eb"/><rect x="342.9" y="183.4" width="1" height="6" fill="#ccd6eb"/><rect x="365.1" y="183.4" width="1" height="6" fill="#ccd6eb"/><rect x="387.2" y="183.4" width="1" height="6" fill="#ccd6eb"/><rect x="409.4" y="183.4" width="1" height="6" fill="#ccd6eb"/><rect x="431.5" y="183.4" width="1" height="6" fill="#ccd6eb"/><rect x="453.7" y="183.4" width="1" height="6" fill="#ccd6eb"/><rect x="475.8" y="183.4" width="1" height="6" fill="#ccd6eb"/><rect x="498.0" y="183.4" width="1" height="6" fill="#ccd6eb"/><rect x="520.1" y="183.4" width="1" height="6" fill="#ccd6eb"/><rect x="542.3" y="183.4" width="1" height="6" fill="#ccd6eb"/><rect x="564.5" y="183.4" width="1" height="6" fill="#ccd6eb"/><rect x="586.6" y="183.4" width="1" height="6" fill="#ccd6eb"/><text x="69.6" y="195" text-anchor="end" transform="rotate(-45 69.6 195)" font-size="8.9" letter-spacing="0.15" fill="#6a6a6a">7 PM</text><text x="91.7" y="195" text-anchor="end" transform="rotate(-45 91.7 195)" font-size="8.9" letter-spacing="0.15" fill="#6a6a6a">8 PM</text><text x="113.9" y="195" text-anchor="end" transform="rotate(-45 113.9 195)" font-size="8.9" letter-spacing="0.15" fill="#6a6a6a">9 PM</text><text x="136.0" y="195" text-anchor="end" transform="rotate(-45 136.0 195)" font-size="8.9" letter-spacing="0.15" fill="#6a6a6a">10 PM</text><text x="158.2" y="195" text-anchor="end" transform="rotate(-45 158.2 195)" font-size="8.9" letter-spacing="0.15" fill="#6a6a6a">11 PM</text><text x="180.3" y="195" text-anchor="end" transform="rotate(-45 180.3 195)" font-size="8.9" letter-spacing="0.15" fill="#6a6a6a">Nov 18, 2021 12 AM</text><text x="202.5" y="195" text-anchor="end" transform="rotate(-45 202.5 195)" font-size="8.9" letter-spacing="0.15" fill="#6a6a6a">1 AM</text><text x="224.6" y="195" text-anchor="end" transform="rotate(-45 224.6 195)" font-size="8.9" letter-spacing="0.15" fill="#6a6a6a">2 AM</text><text x="246.8" y="195" text-anchor="end" transform="rotate(-45 246.8 195)" font-size="8.9" letter-spacing="0.15" fill="#6a6a6a">3 AM</text><text x="268.9" y="195" text-anchor="end" transform="rotate(-45 268.9 195)" font-size="8.9" letter-spacing="0.15" fill="#6a6a6a">4 AM</text><text x="291.1" y="195" text-anchor="end" transform="rotate(-45 291.1 195)" font-size="8.9" letter-spacing="0.15" fill="#6a6a6a">5 AM</text><text x="313.2" y="195" text-anchor="end" transform="rotate(-45 313.2 195)" font-size="8.9" letter-spacing="0.15" fill="#6a6a6a">6 AM</text><text x="335.4" y="195" text-anchor="end" transform="rotate(-45 335.4 195)" font-size="8.9" letter-spacing="0.15" fill="#6a6a6a">7 AM</text><text x="357.5" y="195" text-anchor="end" transform="rotate(-45 357.5 195)" font-size="8.9" letter-spacing="0.15" fill="#6a6a6a">8 AM</text><text x="379.7" y="195" text-anchor="end" transform="rotate(-45 379.7 195)" font-size="8.9" letter-spacing="0.15" fill="#6a6a6a">9 AM</text><text x="401.8" y="195" text-anchor="end" transform="rotate(-45 401.8 195)" font-size="8.9" letter-spacing="0.15" fill="#6a6a6a">10 AM</text><text x="424.0" y="195" text-anchor="end" transform="rotate(-45 424.0 195)" font-size="8.9" letter-spacing="0.15" fill="#6a6a6a">11 AM</text><text x="446.1" y="195" text-anchor="end" transform="rotate(-45 446.1 195)" font-size="8.9" letter-spacing="0.15" fill="#6a6a6a">12 PM</text><text x="468.3" y="195" text-anchor="end" transform="rotate(-45 468.3 195)" font-size="8.9" letter-spacing="0.15" fill="#6a6a6a">1 PM</text><text x="490.4" y="195" text-anchor="end" transform="rotate(-45 490.4 195)" font-size="8.9" letter-spacing="0.15" fill="#6a6a6a">2 PM</text><text x="512.6" y="195" text-anchor="end" transform="rotate(-45 512.6 195)" font-size="8.9" letter-spacing="0.15" fill="#6a6a6a">3 PM</text><text x="534.7" y="195" text-anchor="end" transform="rotate(-45 534.7 195)" font-size="8.9" letter-spacing="0.15" fill="#6a6a6a">4 PM</text><text x="556.9" y="195" text-anchor="end" transform="rotate(-45 556.9 195)" font-size="8.9" letter-spacing="0.15" fill="#6a6a6a">5 PM</text><text x="579.0" y="195" text-anchor="end" transform="rotate(-45 579.0 195)" font-size="8.9" letter-spacing="0.15" fill="#6a6a6a">6 PM</text><text x="297.3" y="17.69999999999999" text-anchor="middle" font-size="14" fill="#333">Bishkek – PM2.5</text><text x="0" y="0" transform="translate(21 111) rotate(-90)" text-anchor="middle" font-size="9.5" fill="#222">AQI</text></svg></div><!--endchart-->

<div class="a cc">
  <div class="a" style="left:0;top:0;width:185px;height:57px;background:#03467f;color:#fff;font-weight:bold;text-align:center">
    <div class="a" style="left:0;width:185px;top:5px;font-size:11px;line-height:13px">Current Conditions</div>
    <div class="a" style="left:0;width:185px;top:23px;font-size:9px;line-height:11px">observed at</div>
    <div class="a" style="left:0;width:185px;top:38px;font-size:11.2px;line-height:13px">Nov 18, 2021 6:00 PM (LT)</div>
  </div>
  <div class="a" style="left:0;top:56px;width:185px;height:107px;background:#ff7e00;color:#fff;font-weight:bold;text-align:center;font-size:15px;line-height:20.7px;padding-top:12px">131 AQI<br>Unhealthy for Sensitive<br>Groups<br>PM2.5</div>
  <div class="a" style="left:0;top:171px;width:185px;text-align:center;font-weight:bold;font-size:9px;color:#222">Health Message</div>
  <div class="a" style="left:4px;top:187px;width:182px;font-size:9px;line-height:16px;color:#222">When AQI values are between 101 and 150,<br>members of sensitive groups may<br>experience health effects, but the general<br>public is unlikely to be affected.</div>
</div>

</body></html>
